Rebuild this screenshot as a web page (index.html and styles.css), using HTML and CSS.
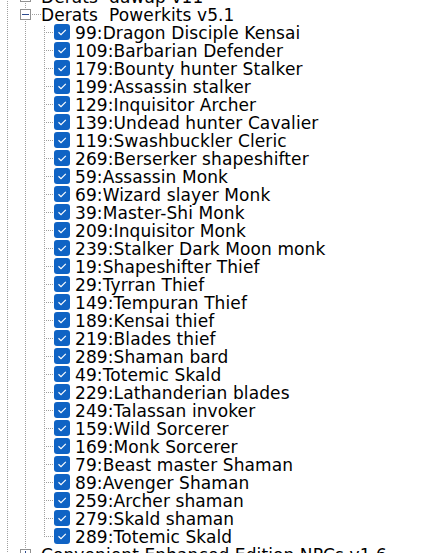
FILE: index.html
```html
<!DOCTYPE html>
<html>
<head>
<meta charset="utf-8">
<link rel="stylesheet" href="styles.css">
</head>
<body>
<div class="tree">
  <div class="node">
    <div class="prow"><span class="exp plus"></span><span class="hline"></span><span class="label">Derats  dawap v11</span></div>
  </div>
  <div class="node">
    <div class="prow"><span class="exp minus"></span><span class="hline"></span><span class="label">Derats  Powerkits v5.1</span></div>
    <div class="children">
      <div class="crow"><span class="cb"></span><span class="label">99:Dragon Disciple Kensai</span></div>
      <div class="crow"><span class="cb"></span><span class="label">109:Barbarian Defender</span></div>
      <div class="crow"><span class="cb"></span><span class="label">179:Bounty hunter Stalker</span></div>
      <div class="crow"><span class="cb"></span><span class="label">199:Assassin stalker</span></div>
      <div class="crow"><span class="cb"></span><span class="label">129:Inquisitor Archer</span></div>
      <div class="crow"><span class="cb"></span><span class="label">139:Undead hunter Cavalier</span></div>
      <div class="crow"><span class="cb"></span><span class="label">119:Swashbuckler Cleric</span></div>
      <div class="crow"><span class="cb"></span><span class="label">269:Berserker shapeshifter</span></div>
      <div class="crow"><span class="cb"></span><span class="label">59:Assassin Monk</span></div>
      <div class="crow"><span class="cb"></span><span class="label">69:Wizard slayer Monk</span></div>
      <div class="crow"><span class="cb"></span><span class="label">39:Master-Shi Monk</span></div>
      <div class="crow"><span class="cb"></span><span class="label">209:Inquisitor Monk</span></div>
      <div class="crow"><span class="cb"></span><span class="label">239:Stalker Dark Moon monk</span></div>
      <div class="crow"><span class="cb"></span><span class="label">19:Shapeshifter Thief</span></div>
      <div class="crow"><span class="cb"></span><span class="label">29:Tyrran Thief</span></div>
      <div class="crow"><span class="cb"></span><span class="label">149:Tempuran Thief</span></div>
      <div class="crow"><span class="cb"></span><span class="label">189:Kensai thief</span></div>
      <div class="crow"><span class="cb"></span><span class="label">219:Blades thief</span></div>
      <div class="crow"><span class="cb"></span><span class="label">289:Shaman bard</span></div>
      <div class="crow"><span class="cb"></span><span class="label">49:Totemic Skald</span></div>
      <div class="crow"><span class="cb"></span><span class="label">229:Lathanderian blades</span></div>
      <div class="crow"><span class="cb"></span><span class="label">249:Talassan invoker</span></div>
      <div class="crow"><span class="cb"></span><span class="label">159:Wild Sorcerer</span></div>
      <div class="crow"><span class="cb"></span><span class="label">169:Monk Sorcerer</span></div>
      <div class="crow"><span class="cb"></span><span class="label">79:Beast master Shaman</span></div>
      <div class="crow"><span class="cb"></span><span class="label">89:Avenger Shaman</span></div>
      <div class="crow"><span class="cb"></span><span class="label">259:Archer shaman</span></div>
      <div class="crow"><span class="cb"></span><span class="label">279:Skald shaman</span></div>
      <div class="crow"><span class="cb"></span><span class="label">289:Totemic Skald</span></div>
    </div>
  </div>
  <div class="node">
    <div class="prow"><span class="exp plus"></span><span class="hline"></span><span class="label">Convenient Enhanced Edition NPCs v1.6</span></div>
  </div>
</div>
</body>
</html>
```
FILE: styles.css
```css
html, body {
  margin: 0;
  padding: 0;
  background: #fff;
  overflow: hidden;
}
body {
  width: 439px;
  height: 553px;
}
.tree {
  margin-top: -13px;
  font-family: "DejaVu Sans", Verdana, sans-serif;
  font-size: 17px;
  color: #000;
  background:
    repeating-linear-gradient(to bottom, #a0a0a0 0 1px, transparent 1px 2px) 7px 0 / 1px 100% no-repeat,
    repeating-linear-gradient(to bottom, #a0a0a0 0 1px, transparent 1px 2px) 25px 0 / 1px 100% no-repeat;
}
.label {
  white-space: pre;
  line-height: 18px;
  margin-top: 2px;
  letter-spacing: 0.1px;
}
.prow {
  height: 18px;
  display: flex;
  align-items: center;
  padding-left: 20px;
}
.exp {
  width: 11px;
  height: 11px;
  box-sizing: border-box;
  border: 1px solid #919191;
  background: #fff;
  display: flex;
  align-items: center;
  justify-content: center;
  position: relative;
}
.exp::before {
  content: "";
  width: 7px;
  height: 1px;
  background: #2c4b8f;
}
.exp.plus::after {
  content: "";
  position: absolute;
  width: 1px;
  height: 7px;
  background: #2c4b8f;
}
.hline {
  width: 9px;
  height: 1px;
  background: repeating-linear-gradient(to right, #a0a0a0 0 1px, transparent 1px 2px);
  margin-left: 1px;
}
.children {
  background: repeating-linear-gradient(to bottom, #a0a0a0 0 1px, transparent 1px 2px) 44px 3px / 1px calc(100% - 12px) no-repeat;
}
.crow {
  height: 18px;
  display: flex;
  align-items: center;
  padding-left: 54px;
  background: repeating-linear-gradient(to right, #a0a0a0 0 1px, transparent 1px 2px) 44px 9px / 10px 1px no-repeat;
}
.cb {
  width: 16px;
  height: 16px;
  border-radius: 3px;
  background: #0f63c4 url("data:image/svg+xml,%3Csvg xmlns='http://www.w3.org/2000/svg' width='16' height='16'%3E%3Cpath d='M4.5 8.3 L7 10.6 L11.8 5.8' fill='none' stroke='white' stroke-width='1.2'/%3E%3C/svg%3E") no-repeat;
  margin-right: 5px;
  flex: none;
}
```
